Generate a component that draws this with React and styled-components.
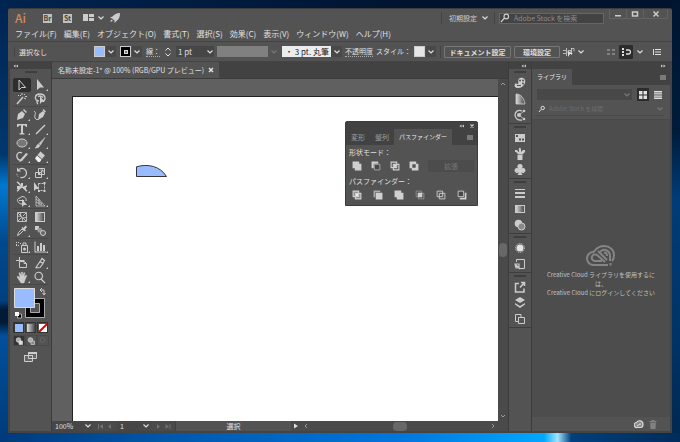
import React, { useState } from 'react';
import styled, { createGlobalStyle } from 'styled-components';

const tools = [
  [
    { name: '選択ツール', icon: <path d="M6 2v10l2.600-2.500h4z" fill="none" stroke="currentColor" /> },
    { name: 'ダイレクト選択', fly: true, icon: <path d="M6 1v11l3-2.500h4z" /> },
    {
      name: '自動選択',
      icon: (
        <g fill="none" stroke="currentColor" strokeWidth="1.500">
          <path d="M4 12l6-7" />
          <path d="M9 1v2M12 2l-1 1M11 6l2 1M7 3l1 1M12 4.500h2M5 3.500h1" strokeWidth="1" />
        </g>
      ),
    },
    {
      name: 'なげなわ',
      icon: (
        <g>
          <path d="M8 9C3 9 3 2 9 2s6 6 3 7M7 8c-2 1-1 3 0 4M7 4.500c2-1 4 0 5 1" fill="none" stroke="currentColor" strokeWidth="1.300" />
          <path d="M9 4v8l1.800-2h3z" />
        </g>
      ),
    },
  ],
  [
    { name: 'ペン', fly: true, icon: <path d="M4 12l1-6 4-3 3 3-2 4zM10 2l1-1 3 3-1 1z" /> },
    {
      name: '曲線',
      icon: (
        <g>
          <path d="M7 12l1-6 4-3 2 2-2 4zM11.500 2l1-1 2.500 2.500-1 1z" />
          <path d="M3 3c3 2 0 4 1 7 1 2 3 2 4 1" fill="none" stroke="currentColor" />
        </g>
      ),
    },
    { name: '文字', fly: true, icon: <path d="M4 2h10v3h-1L12 3.500h-2V11l1.500.5v1h-5v-1L8 11V3.500H6L5 5H4z" /> },
    { name: '直線', fly: true, icon: <path d="M5 12l9-9" stroke="currentColor" strokeWidth="1.400" /> },
    { name: '楕円形', fly: true, icon: <ellipse cx="9" cy="7" rx="5" ry="4" fill="#777" stroke="currentColor" /> },
    { name: 'ブラシ', fly: true, icon: <path d="M14 1.500L9.500 9 8 7.500zM7.500 8L9 9.500c-1 2.500-3 2.500-5 2.500 2-1 1-3 3.500-4z" stroke="currentColor" strokeWidth=".5" /> },
    {
      name: 'Shaper',
      fly: true,
      icon: (
        <g>
          <path d="M9 3C6 1 3 4 4 7c1 4 5 4 6 1" fill="none" stroke="currentColor" strokeWidth="1.300" />
          <path d="M7 10l6-7 2 1-6 7-3 1z" />
        </g>
      ),
    },
    {
      name: '消しゴム',
      fly: true,
      icon: (
        <g>
          <path d="M9.500 1.500l4.500 4-3 3.500-4.500-4z" />
          <path d="M6 5.500l4.500 4-1.500 2.500H7L4 8.500z" fill="#f0f0f0" />
        </g>
      ),
    },
  ],
  [
    {
      name: '回転',
      fly: true,
      icon: (
        <g>
          <path d="M6 3.500c4-2.500 7.500 0 7.500 3.500s-3 5-6 4.500" fill="none" stroke="currentColor" strokeWidth="1.300" />
          <path d="M5 10.500C4 9.500 3.800 8.500 4 7" fill="none" stroke="currentColor" strokeDasharray="1 1" />
          <path d="M4 1.500v4h4z" />
        </g>
      ),
    },
    {
      name: '拡大・縮小',
      fly: true,
      icon: <path d="M7.500 2.500h6v6h-6zM4.500 6.500h6v5h-6zM7 9l5-5M9.500 4H12v2.500" fill="none" stroke="currentColor" />,
    },
    {
      name: '線幅',
      fly: true,
      icon: (
        <g>
          <path d="M4 2c3 1 3 4 5 5s4-1 5-1M4 11c2-1 3-4 5-4s3 3 5 4" fill="none" stroke="currentColor" strokeWidth="1.500" />
          <path d="M4 6h3v3H4zM8 3h2v3H8zM10 7h3v2h-3z" />
        </g>
      ),
    },
    {
      name: '自由変形',
      icon: (
        <g>
          <path d="M7.500 3.500h6v7h-6z" fill="none" stroke="currentColor" strokeDasharray="2 1" />
          <path d="M3 2v9l2-2h3zM12.500 2h2v2h-2zM12.500 10h2v2h-2zM7 10h2v2H7z" />
        </g>
      ),
    },
    {
      name: 'シェイプ形成',
      fly: true,
      icon: (
        <g>
          <path d="M9 10C4 10 3 4 7 4c2-3 7-1 6 3M6 6.500h5" fill="none" stroke="currentColor" />
          <path d="M9 5v8l2-2h3z" />
        </g>
      ),
    },
    {
      name: '遠近グリッド',
      fly: true,
      icon: <path d="M5 2v10h9zM5 5l6 5M5 8l6 3M8 5v6" fill="none" stroke="currentColor" strokeWidth=".8" />,
    },
  ],
  [
    {
      name: 'メッシュ',
      icon: (
        <path
          d="M4.500 2.500h9v9h-9zM4.500 7c3-3 5 3 9 0M8 2.500c-2 4 3 5 1 9M5 3l3 3M13 3l-3 3M5 11l3-3M13 11l-3-3"
          fill="none"
          stroke="currentColor"
          strokeWidth=".9"
        />
      ),
    },
    {
      name: 'グラデーション',
      icon: <rect x="4.500" y="2.500" width="9" height="9" fill="url(#shade)" stroke="currentColor" />,
    },
    {
      name: 'スポイト',
      fly: true,
      icon: (
        <g>
          <path d="M4.500 11.500l1-3 3.500-3.500 1.500 1.500L7 10z" fill="none" stroke="currentColor" />
          <path d="M8.500 4l1-1 1 1 2-2.500L14 3l-2 2.500 1 1-1 1z" />
        </g>
      ),
    },
    {
      name: 'ブレンド',
      icon: (
        <g>
          <path d="M4 2h4v4H4z" />
          <rect x="6.500" y="4" width="4.500" height="4.500" rx="1.500" fill="#999" />
          <circle cx="12" cy="9" r="2.500" fill="#666" stroke="currentColor" />
        </g>
      ),
    },
  ],
  [
    {
      name: 'シンボルスプレー',
      fly: true,
      icon: (
        <g>
          <path d="M8.500 5.500h6v7h-6zM10 5V3h3v2" fill="none" stroke="currentColor" />
          <circle cx="11.500" cy="9" r="1.500" />
          <path d="M3 2h1v1H3zM5 2h1v1H5zM7 3h1v1H7zM3 4h1v2H3zM5 5h1v1H5z" />
        </g>
      ),
    },
    { name: '棒グラフ', fly: true, icon: <path d="M3.500 1.500h1v10H15v1H3.500zM6 6h2v5H6zM9 3h2v8H9zM12 5h2v6h-2z" /> },
  ],
  [
    {
      name: 'アートボード',
      icon: <path d="M3 4.500h8.500M6.500 1v8M6.500 5.500h5l2 2v4h-7zM11 5.500v2h2" fill="none" stroke="currentColor" />,
    },
    {
      name: 'スライス',
      fly: true,
      icon: <path d="M5 11.500l4-6 3 2-3 4-4.500.5M9.500 5L11 2.500l2.500 2L12 7" fill="none" stroke="currentColor" strokeWidth="1.200" />,
    },
    { name: '手のひら', fly: true, icon: <path d="M5 6l2 2-1-5 1-.5L8.500 6V2h1.200v4l1.300-3.500 1 .5-1 4 2-2 .8.800L12 10l-1 3H8L4 7z" stroke="currentColor" strokeWidth=".4" /> },
    {
      name: 'ズーム',
      icon: <path d="M10 9l4 4M11.500 6A3.700 3.700 0 1 1 4 6a3.700 3.700 0 0 1 7.500 0z" fill="none" stroke="currentColor" strokeWidth="1.200" />,
    },
  ],
];

const dockGroups = [
  [
    {
      name: 'カラー',
      icon: (
        <g>
          <path d="M9 2c4-1 6 2 5 5s-4 5-7 5-4-2-3-4 2 1 3 0-1-5 2-6z" />
          <g fill="#535353">
            <circle cx="9" cy="4.500" r="1" />
            <circle cx="12" cy="4.500" r="1" />
            <circle cx="12" cy="7.500" r="1" />
            <path d="M6 9h4v1H6z" />
          </g>
        </g>
      ),
    },
    { name: 'カラーガイド', icon: <path d="M5 2c5 0 8 4 9 10H5z" fill="url(#shade)" stroke="currentColor" strokeWidth=".8" /> },
    {
      name: 'カラーテーマ',
      icon: (
        <g>
          <path d="M11 3C7 1 4 4 4 7s3 6 7 5" fill="none" stroke="currentColor" strokeWidth="1.300" />
          <path d="M8 7l5-4M8 7l5 4" stroke="currentColor" strokeWidth=".8" />
          <circle cx="8" cy="7" r="2" />
          <circle cx="13" cy="3" r="1.300" />
          <circle cx="13" cy="11" r="1.300" />
        </g>
      ),
    },
  ],
  [
    { name: 'スウォッチ', icon: <path d="M4 3h10v8H4zM5 4v2h2V4zM11 7.500v2h2v-2zM8 7.500v2h2v-2z" fillRule="evenodd" /> },
    {
      name: 'ブラシ',
      icon: <path d="M6.500 8h5v5h-5zM7.500 7.500L5 5H4V3h2l2 2.500V3l-.5-1L9 .5 10 2v3l2-2h2v2l-2.500 2.500z" />,
    },
    { name: 'シンボル', icon: <path d="M9 1a2.500 2.500 0 0 1 2 4.200A2.500 2.500 0 1 1 10 9l1.500 3h-5L8 9a2.500 2.500 0 1 1-1-3.800A2.500 2.500 0 0 1 9 1z" /> },
  ],
  [
    { name: '線', icon: <path d="M4 3h10v1H4zM4 6h10v2H4zM4 10h10v2H4z" /> },
    { name: 'グラデーション', icon: <rect x="4.500" y="3.500" width="9" height="7" fill="url(#shade)" stroke="currentColor" /> },
    {
      name: '透明',
      icon: (
        <g>
          <circle cx="7.500" cy="5.500" r="3.800" />
          <circle cx="10.500" cy="8.500" r="3.500" fill="#888" stroke="currentColor" />
        </g>
      ),
    },
  ],
  [
    {
      name: 'アピアランス',
      icon: (
        <g>
          <circle cx="9" cy="7" r="3.500" fill="#e4e4e4" />
          <circle cx="9" cy="7" r="4.500" fill="none" stroke="currentColor" strokeDasharray="1 1" />
        </g>
      ),
    },
    {
      name: 'グラフィックスタイル',
      icon: (
        <g fill="none" stroke="currentColor">
          <path d="M5.500 5V2.500h8v9H9" />
          <path d="M4 7h4v4H5zM5 8l4 4" strokeWidth="1.200" />
        </g>
      ),
    },
  ],
  [
    { name: 'アセットの書き出し', icon: <path d="M8 3.500H4.500v8.500h8.500V8.500M9 7.500L13 3M10 2.500h3.500V6" fill="none" stroke="currentColor" strokeWidth="1.500" /> },
    { name: 'レイヤー', icon: <path d="M9 1l5 3-5 3-5-3zM4 7l5 3 5-3v1.500L9 12 4 8.500z" /> },
    { name: 'アートボード', icon: <path d="M10 5V2.500H4.500v7H7M7.500 5.500h6v6h-6z" fill="none" stroke="currentColor" /> },
  ],
];

const shapeModes = [
  { name: '合体', icon: <path d="M1 1h6v2h2v6H3V7H1z" /> },
  {
    name: '前面オブジェクトで型抜き',
    icon: (
      <g>
        <path d="M1 1h6v2H3v4H1z" />
        <path d="M3.500 3.500h5v5h-5z" fill="#484848" stroke="#aaa" strokeWidth=".8" />
      </g>
    ),
  },
  {
    name: '交差',
    icon: (
      <g>
        <path d="M1.500 1.500h5v5h-5zM3.500 3.500h5v5h-5z" fill="none" stroke="currentColor" />
        <path d="M4 4h2v2H4z" />
      </g>
    ),
  },
  { name: '中マド', icon: <path d="M1 1h6v2h2v6H3V7H1zM3.500 3.500v3h3v-3z" fillRule="evenodd" /> },
];

const pathfinders = [
  {
    name: '分割',
    icon: (
      <g>
        <path d="M1.500 1.500h5v5h-5zM3.500 3.500h5v5h-5z" fill="#888" stroke="currentColor" />
        <path d="M4 4h2v2H4z" fill="#eee" />
      </g>
    ),
  },
  {
    name: '刈り込み',
    icon: (
      <g>
        <path d="M1 1h6v1.500H2.500V7H1z" fill="#aaa" />
        <path d="M3 3h6v6H3z" />
      </g>
    ),
  },
  { name: '合流', icon: <path d="M1 1h6v2h2v6H3V7H1z" /> },
  {
    name: '切り抜き',
    icon: (
      <g>
        <path d="M1.500 1.500h5v5h-5zM3.500 3.500h5v5h-5z" fill="none" stroke="#999" strokeWidth=".7" />
        <path d="M3 3h4v4H3z" />
      </g>
    ),
  },
  { name: 'アウトライン', icon: <path d="M1.500 1.500h5v5h-5zM3.500 3.500h5v5h-5z" fill="none" stroke="currentColor" strokeWidth=".8" /> },
  {
    name: '背面オブジェクトで型抜き',
    icon: (
      <g>
        <path d="M7.500 3H9v6H3V7.500h4.500z" />
        <path d="M1.500 1.500h5v5h-5z" fill="#484848" stroke="currentColor" strokeWidth=".8" />
      </g>
    ),
  },
];

const menus = ['ファイル(F)', '編集(E)', 'オブジェクト(O)', '書式(T)', '選択(S)', '効果(C)', '表示(V)', 'ウィンドウ(W)', 'ヘルプ(H)'];

const Chevron = ({ dim }) => (
  <ChevronSvg viewBox="0 0 8 6" $dim={dim}>
    <path d="M1.500 1.500L4 4l2.500-2.500" />
  </ChevronSvg>
);

const Magnifier = () => (
  <SmallSvg viewBox="0 0 10 10">
    <path d="M1 9l3-3.500M4 3.500a2.300 2.300 0 1 1 4.600 0 2.300 2.300 0 0 1-4.600 0z" fill="none" stroke="currentColor" strokeWidth="1.200" />
  </SmallSvg>
);

const MenuLines = () => (
  <SmallSvg viewBox="0 0 10 10">
    <path d="M2 3h6v1H2zM2 5h6v1H2zM2 7h6v1H2zM2 3h6v5H2z" fillOpacity=".6" />
  </SmallSvg>
);

const Arrows = ({ right }) => (
  <SmallSvg viewBox="0 0 10 10">
    <path d={right ? 'M3 3.500L5 5 3 6.500zM5.500 3.500L7.500 5l-2 1.500z' : 'M4.500 3.500L2.500 5l2 1.500zM7 3.500L5 5l2 1.500z'} />
  </SmallSvg>
);

const Dropdown = ({ label, options, width, tone, disabled }) => (
  <DropdownBox $width={width} $tone={tone}>
    <select aria-label={label} disabled={disabled}>
      {options.map(option => (
        <option key={option}>{option}</option>
      ))}
    </select>
    <DropdownMark $tone={tone}>
      <Chevron dim={disabled} />
    </DropdownMark>
  </DropdownBox>
);

const App = () => {
  const [tool, setTool] = useState('選択ツール');

  return (
    <Desktop>
      <GlobalStyle />
      <Gradients aria-hidden="true">
        <defs>
          <linearGradient id="shade">
            <stop offset="0" stopColor="#ddd" />
            <stop offset="1" stopColor="#444" />
          </linearGradient>
        </defs>
      </Gradients>
      <Window>
        <TitleBar>
          <Logo>Ai</Logo>
          <AppBadge>Br</AppBadge>
          <AppBadge>St</AppBadge>
          <TitleButton aria-label="ドキュメントレイアウト">
            <WideSvg viewBox="0 0 12 10">
              <path d="M0 1h5v7H0zM6 1h5v3H6zM6 5h5v3H6z" />
            </WideSvg>
            <Chevron />
          </TitleButton>
          <TitleButton aria-label="GPU パフォーマンス">
            <WideSvg viewBox="0 0 12 10">
              <path d="M11 0C7 0 5 2 3.500 3.500L1 4.500l2 1 2.500 2V10l2-2C10 6 11 4 11 0zM1 9l1.500-2.500L4 8z" />
            </WideSvg>
          </TitleButton>
          <Spacer />
          <Divider />
          <Dropdown label="ワークスペース" options={['初期設定']} width={44} />
          <Divider />
          <StockSearch>
            <Magnifier />
            <input aria-label="Adobe Stock を検索" placeholder="Adobe Stock を検索" />
          </StockSearch>
          <WindowButtons>
            <button aria-label="最小化">
              <SmallSvg viewBox="0 0 10 10"><path d="M2 6h6v1.500H2z" /></SmallSvg>
            </button>
            <button aria-label="最大化">
              <SmallSvg viewBox="0 0 10 10"><path d="M2.500 3h5v4h-5z" fill="none" stroke="currentColor" strokeWidth="1.500" /></SmallSvg>
            </button>
            <button aria-label="閉じる">
              <SmallSvg viewBox="0 0 10 10"><path d="M2.500 2.500l5 5M7.500 2.500l-5 5" stroke="currentColor" strokeWidth="1.500" /></SmallSvg>
            </button>
          </WindowButtons>
        </TitleBar>

        <MenuBar>
          {menus.map(menu => (
            <button key={menu}>{menu}</button>
          ))}
        </MenuBar>

        <ControlBar>
          <SelectionLabel>選択なし</SelectionLabel>
          <SwatchButton aria-label="塗り">
            <Swatch $fill="#99bbff" />
            <ChevronCell><Chevron /></ChevronCell>
          </SwatchButton>
          <SwatchButton aria-label="線の色">
            <Swatch $fill="#000"><i /></Swatch>
            <ChevronCell><Chevron /></ChevronCell>
          </SwatchButton>
          <BarLabel as="label" htmlFor="stroke-width" $underline>線：</BarLabel>
          <SmallSvg viewBox="0 0 10 10">
            <path d="M2.500 3.500L5 1l2.500 2.500M2.500 6.500L5 9l2.500-2.500" fill="none" stroke="currentColor" />
          </SmallSvg>
          <StrokeField>
            <input id="stroke-width" defaultValue="1 pt" />
            <Chevron />
          </StrokeField>
          <Dropdown label="可変線幅プロファイル" options={['']} width={62} tone="grey" disabled />
          <Dropdown label="ブラシ定義" options={['・ 3 pt. 丸筆']} width={60} tone="white" />
          <BarLabel $underline>不透明度</BarLabel>
          <BarLabel>スタイル：</BarLabel>
          <SwatchButton aria-label="グラフィックスタイル">
            <Swatch $fill="#e6e6e6" />
            <ChevronCell><Chevron /></ChevronCell>
          </SwatchButton>
          <Divider />
          <OutlineButton $width={67}>ドキュメント設定</OutlineButton>
          <OutlineButton $width={46}>環境設定</OutlineButton>
          <TitleButton aria-label="整列">
            <WideSvg viewBox="0 0 12 10">
              <path d="M0 3.500h3M0 6.500h3M3.500 1v8M5 3.500h3v3H5zM8.500 1v7M8 1.500h3v3" fill="none" stroke="currentColor" strokeWidth=".7" />
              <path d="M5 4l5 3H7l-2 3z" />
            </WideSvg>
            <Chevron />
          </TitleButton>
          <Spacer />
          <DimIcon>
            <SmallSvg viewBox="0 0 10 10"><path d="M1 2h3v2H1zM6 2h3v2H6zM1 6h3v2H1zM6 6h3v2H6z" /></SmallSvg>
          </DimIcon>
          <SnapButton aria-label="スナップ">
            <SmallSvg viewBox="0 0 10 10">
              <path d="M1 1h2v2H1zM1 4h2v2H1zM1 7h2v2H1z" />
              <path d="M5 3h2.500a1.500 1.500 0 0 1 0 4H5" fill="none" stroke="currentColor" strokeWidth="1.300" />
            </SmallSvg>
          </SnapButton>
          <Chevron />
          <ListButton aria-label="コントロールメニュー">
            <SmallSvg viewBox="0 0 10 10"><path d="M1 2h1v6H1zM3 2h6v1H3zM3 4.500h6v1H3zM3 7h6v1H3z" /></SmallSvg>
          </ListButton>
        </ControlBar>

        <Workspace>
          <ToolColumn>
            <Strip $start><Arrows /></Strip>
            <Grip />
            {tools.map((group, i) => (
              <ToolGroup key={i}>
                {group.map(item => (
                  <ToolButton key={item.name} aria-label={item.name} $active={tool === item.name} onClick={() => setTool(item.name)}>
                    <IconSvg viewBox="0 0 18 14">
                      {item.icon}
                      {item.fly && <path d="M17 11v2h-2z" />}
                    </IconSvg>
                  </ToolButton>
                ))}
              </ToolGroup>
            ))}
            <PaintSvg viewBox="0 0 34 34" role="img" aria-label="塗りと線">
              <path d="M11.500 12.500h19v19h-19z" fill="#000" stroke="#aaa" />
              <path d="M16.500 17.500h9v9h-9z" fill="#535353" stroke="#aaa" />
              <path d="M.5 2.500h20v19H.5z" fill="#99bbff" stroke="#ddd" />
              <path d="M27 4h3v4M28 2l-2 2 2 2M28.500 7l1.500 2 1.500-2" fill="none" stroke="#ccc" />
              <path d="M3.500 28h4v4h-4z" fill="#000" stroke="#ccc" strokeWidth=".8" />
              <path d="M1 26h4v4H1z" fill="#fff" />
            </PaintSvg>
            <PaintRow>
              <button aria-label="カラー"><PaintSvgSmall viewBox="0 0 8 8"><path d="M0 0h8v8H0z" fill="#99bbff" /></PaintSvgSmall></button>
              <button aria-label="グラデーション"><PaintSvgSmall viewBox="0 0 8 8"><path d="M0 0h8v8H0z" fill="url(#shade)" /></PaintSvgSmall></button>
              <button aria-label="なし">
                <PaintSvgSmall viewBox="0 0 8 8">
                  <path d="M0 0h8v8H0z" fill="#fff" />
                  <path d="M0 8l8-8" stroke="#e00" strokeWidth="2" />
                </PaintSvgSmall>
              </button>
            </PaintRow>
            <PaintRow $modes>
              {['標準描画', '背面描画', '内側描画'].map((mode, i) => (
                <button key={mode} aria-label={mode}>
                  <PaintSvgSmall viewBox="0 0 8 8">
                    <circle cx="3.500" cy="3" r="2.300" fill={i === 2 ? 'none' : '#aaa'} stroke={i === 2 ? '#6a6a6a' : '#ddd'} strokeWidth=".7" />
                    {i < 2 && <path d="M4 4h3.500v3.500H4z" fill={i ? '#888' : '#ddd'} stroke="#ddd" strokeWidth=".6" />}
                  </PaintSvgSmall>
                </button>
              ))}
            </PaintRow>
            <ScreenButton aria-label="スクリーンモード">
              <IconSvg viewBox="0 0 18 14">
                <path d="M6.500 2.500h8v6h-8zM2.500 5.500h8v6h-8z" fill="#666" stroke="currentColor" />
                <path d="M6 2h9v2H6zM2 5h9v1H2z" />
              </IconSvg>
            </ScreenButton>
          </ToolColumn>

          <DocumentArea>
            <DocTabs>
              <DocTab>
                名称未設定-1* @ 100% (RGB/GPU プレビュー)
                <button aria-label="タブを閉じる">
                  <SmallSvg viewBox="0 0 10 10"><path d="M3 3l4 4M7 3L3 7" stroke="currentColor" strokeWidth="1.500" /></SmallSvg>
                </button>
              </DocTab>
            </DocTabs>
            <CanvasRow>
              <Canvas>
                <Artboard>
                  <Shape viewBox="0 0 32 12">
                    <path d="M.5 1.800C12-1.500 24 1 30.500 11.500H.5z" fill="#99bbff" stroke="#222" strokeWidth=".9" />
                  </Shape>
                  <Floating>
                    <FloatingStrip>
                      <Arrows />
                      <button aria-label="パネルを閉じる">
                        <SmallSvg viewBox="0 0 10 10"><path d="M3.500 3.500l3 3M6.500 3.500l-3 3" stroke="currentColor" strokeWidth="1.200" /></SmallSvg>
                      </button>
                    </FloatingStrip>
                    <PanelTabs>
                      <PanelTab>変形</PanelTab>
                      <PanelTab>整列</PanelTab>
                      <PanelTab $active>パスファインダー</PanelTab>
                      <Spacer />
                      <MenuLines />
                    </PanelTabs>
                    <PanelTitle>形状モード：</PanelTitle>
                    <PathRow $gap={9}>
                      {shapeModes.map(item => (
                        <button key={item.name} aria-label={item.name}>
                          <SmallSvg viewBox="0.500 0.500 9 9">{item.icon}</SmallSvg>
                        </button>
                      ))}
                      <ExpandButton disabled>拡張</ExpandButton>
                    </PathRow>
                    <PanelTitle>パスファインダー：</PanelTitle>
                    <PathRow $gap={11}>
                      {pathfinders.map(item => (
                        <button key={item.name} aria-label={item.name}>
                          <SmallSvg viewBox="0.500 0.500 9 9">{item.icon}</SmallSvg>
                        </button>
                      ))}
                    </PathRow>
                  </Floating>
                </Artboard>
              </Canvas>
              <ScrollColumn>
                <SmallSvg viewBox="0 0 10 10"><path d="M3 6l2-2 2 2" fill="none" stroke="currentColor" /></SmallSvg>
                <Thumb $vertical />
                <SmallSvg viewBox="0 0 10 10"><path d="M3 4l2 2 2-2" fill="none" stroke="currentColor" /></SmallSvg>
              </ScrollColumn>
            </CanvasRow>
            <StatusBar>
              <Dropdown label="ズーム" options={['100%']} width={41} tone="dark" />
              <StatusNav>
                <SmallSvg viewBox="0 0 10 10"><path d="M3 3h1v5H3zM8 3v5L4.500 5.500z" /></SmallSvg>
                <SmallSvg viewBox="0 0 10 10"><path d="M6 3v5L3 5.500z" /></SmallSvg>
              </StatusNav>
              <Dropdown label="アートボード" options={['1']} width={34} tone="dark" />
              <StatusNav>
                <SmallSvg viewBox="0 0 10 10"><path d="M4 3v5l3-2.500z" /></SmallSvg>
                <SmallSvg viewBox="0 0 10 10"><path d="M6.500 3h1v5h-1zM2.500 3v5L6 5.500z" /></SmallSvg>
              </StatusNav>
              <StatusText>選択</StatusText>
              <PlayButton aria-label="ステータス表示">
                <SmallSvg viewBox="0 0 10 10"><path d="M3 2.500v5L7 5z" /></SmallSvg>
              </PlayButton>
              <ScrollRow>
                <SmallSvg viewBox="0 0 10 10"><path d="M6 3L4 5l2 2" fill="none" stroke="currentColor" /></SmallSvg>
                <Thumb />
                <SmallSvg viewBox="0 0 10 10"><path d="M4 3l2 2-2 2" fill="none" stroke="currentColor" /></SmallSvg>
              </ScrollRow>
            </StatusBar>
          </DocumentArea>

          <Dock>
            <Strip><Arrows /></Strip>
            {dockGroups.map((group, i) => (
              <DockGroup key={i}>
                <Grip />
                {group.map(item => (
                  <button key={item.name} aria-label={item.name}>
                    <IconSvg viewBox="0 0 18 14">{item.icon}</IconSvg>
                  </button>
                ))}
              </DockGroup>
            ))}
          </Dock>

          <Library>
            <Strip><Arrows right /></Strip>
            <PanelTabs>
              <PanelTab $active>ライブラリ</PanelTab>
              <Spacer />
              <MenuLines />
            </PanelTabs>
            <LibraryTools>
              <LibraryRow>
                <Dropdown label="ライブラリ" options={['']} tone="sunken" disabled />
                <ViewButton aria-label="アイコン表示" $active>
                  <SmallSvg viewBox="0 0 10 10"><path d="M1 1h3.500v3.500H1zM5.500 1H9v3.500H5.500zM1 5.500h3.500V9H1zM5.500 5.500H9V9H5.500z" /></SmallSvg>
                </ViewButton>
                <ViewButton aria-label="リスト表示">
                  <SmallSvg viewBox="0 0 10 10"><path d="M1 1h8v1.400H1zM1 3.200h8v1.400H1zM1 5.400h8v1.400H1zM1 7.600h8V9H1z" /></SmallSvg>
                </ViewButton>
              </LibraryRow>
              <LibrarySearch>
                <SmallSvg viewBox="0 0 10 10">
                  <path d="M2 8l2-2.500M4 4a1.700 1.700 0 1 1 3.400 0A1.700 1.700 0 0 1 4 4z" fill="none" stroke="currentColor" />
                </SmallSvg>
                <input aria-label="ライブラリ検索" placeholder="Adobe Stock を検索" disabled />
                <Chevron dim />
              </LibrarySearch>
            </LibraryTools>
            <LibraryBody>
              <CloudSvg viewBox="0 0 30 22">
                <path d="M22 20H8a6.500 6.500 0 0 1-1-13c2 0 3-6 11-6 6 0 10 4 10 9 0 3-1 5-2 6" />
                <path d="M16 16H9a3.300 3.300 0 1 1 2-6l8 7M12 6l9 9" />
                <path d="M14 7c3-4 10-2 10 4v5M18 8c2-1 3 1 3 3" />
                <path d="M24.500 18v2.500" />
              </CloudSvg>
              <p>Creative Cloud ライブラリを使用するには、</p>
              <p>Creative Cloud にログインしてください</p>
            </LibraryBody>
            <LibraryFooter>
              <SmallSvg viewBox="0 0 10 10">
                <path d="M3 8.500a2.500 2.500 0 0 1-.5-5 3.500 3.500 0 0 1 6.500 2c0 2-1 3-2.500 3z" fill="#888" stroke="#e0d8d0" strokeWidth="1.200" />
                <path d="M3 6.500c2 1 2-3 4-1" fill="none" stroke="#fff" />
              </SmallSvg>
              <DimIcon>
                <SmallSvg viewBox="0 0 10 10"><path d="M1.500 2h2V1h3v1h2v1h-7zM2 3.500h6L7.500 10h-5z" /></SmallSvg>
              </DimIcon>
            </LibraryFooter>
          </Library>
        </Workspace>
      </Window>
    </Desktop>
  );
};

export default App;

const GlobalStyle = createGlobalStyle`
  * {
    box-sizing: border-box;
  }

  body {
    margin: 0;
    font: 7px/10px "Noto Sans CJK JP", sans-serif;
    color: #e0e0e0;
  }

  button, input, select {
    margin: 0;
    padding: 0;
    border: 0;
    border-radius: 0;
    background: none;
    font: inherit;
    color: inherit;
  }

  button {
    display: flex;
    align-items: center;
    justify-content: center;
    white-space: nowrap;
  }

  svg {
    display: block;
    flex: none;
    fill: currentColor;
  }

  p {
    margin: 0;
  }
`;

const Desktop = styled.div`
  display: flex;
  flex-direction: column;
  min-height: 100vh;
  padding: 8px 8px 9px;
  background:
    linear-gradient(to right, #003a7c, #0058ac 25%, #0078e0 60%, #00a8ff 80%, #9fe4ff 82%, #00407c 84%, #002c5c) left bottom / 100% 9px no-repeat,
    linear-gradient(#002450, #00386e 35%, #0078d0 42%, #00488c 55%, #004080 68%, #001a38 70%, #001a38 73%, #00509c 76%, #003a78) left top / 8px 100% no-repeat,
    linear-gradient(#001630, #001c3c 30%, #003c78 45%, #003468 75%, #002850) right top / 8px 100% no-repeat,
    linear-gradient(to right, #002450, #001430 60%);
`;

const Gradients = styled.svg`
  position: absolute;
  width: 0;
  height: 0;
`;

const Window = styled.div`
  flex: 1;
  display: flex;
  flex-direction: column;
  border-top: 1px solid #3c3c3c;
  border-bottom: 2px solid #444;
  border-radius: 2px 2px 0 0;
  background: #535353;
  overflow: hidden;
`;

const Spacer = styled.div`
  flex: 1;
`;

const Divider = styled.div`
  width: 1px;
  height: 12px;
  background: #444;
`;

const SmallSvg = styled.svg`
  width: 10px;
  height: 10px;
`;

const WideSvg = styled.svg`
  width: 12px;
  height: 10px;
`;

const IconSvg = styled.svg`
  width: 18px;
  height: 14px;
`;

const ChevronSvg = styled.svg`
  width: 8px;
  height: 6px;
  fill: none;
  stroke: ${props => (props.$dim ? '#777' : '#ddd')};
  stroke-width: 1.2;
`;

const TitleBar = styled.header`
  display: flex;
  align-items: center;
  height: 18px;
  padding: 0 4px 0 7px;
  gap: 4px;
  color: #ccc;
`;

const Logo = styled.div`
  width: 24px;
  font-size: 12px;
  font-weight: 500;
  color: #d08c5c;
`;

const AppBadge = styled.div`
  width: 9px;
  margin-right: 7px;
  background: #c0c0c0;
  color: #444;
  font-size: 7px;
  font-weight: 700;
  line-height: 9px;
  text-align: center;
`;

const TitleButton = styled.button`
  gap: 2px;
`;

const StockSearch = styled.div`
  display: flex;
  align-items: center;
  gap: 4px;
  width: 105px;
  height: 11px;
  margin-right: 1px;
  border: 1px solid #666;
  background: #434343;

  input {
    flex: 1;
    min-width: 0;
    height: 9px;
    font-size: 7px;
  }

  input::placeholder {
    color: #8c8c8c;
  }
`;

const WindowButtons = styled.div`
  display: flex;
  align-self: flex-start;

  button {
    width: 17px;
    height: 10px;
    border: 1px solid #626262;
    border-width: 0 0 1px 1px;
  }

  button:last-child {
    width: 25px;
    border-right-width: 1px;
  }
`;

const MenuBar = styled.nav`
  display: flex;
  gap: 7px;
  height: 15px;
  padding-left: 7px;
  border-bottom: 1px solid #444;
  font-size: 8px;
`;

const DropdownBox = styled.div`
  display: grid;
  align-items: center;
  flex: ${props => (props.$width ? 'none' : '1')};
  width: ${props => (props.$width ? `${props.$width}px` : 'auto')};

  select {
    grid-area: 1 / 1;
    width: 100%;
    height: ${props => (props.$tone === 'dark' ? '10px' : '11px')};
    padding: 0 12px 0 3px;
    appearance: none;
    background: ${props => ({ grey: '#808080', white: '#ececec', dark: '#464646', sunken: '#484848' })[props.$tone] || 'none'};
    color: ${props => (props.$tone === 'white' ? '#222' : 'inherit')};
    opacity: 1;
  }
`;

const DropdownMark = styled.span`
  grid-area: 1 / 1;
  justify-self: end;
  display: grid;
  place-items: center;
  width: 11px;
  height: ${props => (props.$tone === 'dark' ? '10px' : '11px')};
  background: ${props => ({ grey: '#535353', white: '#484848', dark: '#484848' })[props.$tone] || 'none'};
  pointer-events: none;
`;

const ControlBar = styled.div`
  display: flex;
  align-items: center;
  gap: 3px;
  height: 20px;
  padding: 0 10px 0 6px;
  border-bottom: 1px solid #444;

  select {
    font-size: 8px;
  }
`;

const SelectionLabel = styled.div`
  width: 77px;
  padding-left: 4px;
  border-left: 1px solid #444;
`;

const SwatchButton = styled.button`
  gap: 1px;
  margin-right: 1px;
`;

const Swatch = styled.span`
  display: grid;
  place-items: center;
  width: 11px;
  height: 11px;
  border: 1px solid #ccc;
  background: ${props => props.$fill};

  i {
    width: 4px;
    height: 4px;
    border: 1px solid #ddd;
    background: #777;
  }
`;

const ChevronCell = styled.span`
  display: grid;
  place-items: center;
  width: 10px;
  height: 11px;
  background: #484848;
`;

const BarLabel = styled.span`
  white-space: nowrap;
  border-bottom: 1px ${props => (props.$underline ? 'dotted #aaa' : 'solid transparent')};
`;

const StrokeField = styled.div`
  display: flex;
  align-items: center;
  width: 38px;
  height: 11px;
  padding-left: 2px;
  background: #464646;

  input {
    flex: 1;
    min-width: 0;
    font-size: 8px;
  }
`;

const OutlineButton = styled.button`
  width: ${props => props.$width}px;
  height: 12px;
  border: 1px solid #777;
  border-radius: 1px;
  font-weight: 700;
`;

const DimIcon = styled.span`
  color: #808080;
`;

const SnapButton = styled.button`
  width: 14px;
  height: 14px;
  border-radius: 1px;
  background: #2c2c2c;
`;

const ListButton = styled.button`
  margin-left: 5px;
`;

const Workspace = styled.div`
  flex: 1;
  display: grid;
  grid-template-columns: 44px 1fr 24px 140px;
  min-height: 0;
`;

const Strip = styled.div`
  display: flex;
  justify-content: ${props => (props.$start ? 'flex-start' : 'flex-end')};
  align-items: center;
  height: 7px;
  padding: 0 2px 0 1px;
  background: #424242;
  color: #ccc;
`;

const Grip = styled.div`
  width: 12px;
  height: 2px;
  margin: 2px auto;
  background: #3e3e3e;
`;

const ToolColumn = styled.aside`
  border-left: 2px solid #444;
  border-right: 1px solid #3c3c3c;
  color: #ccc;

  ${Grip} {
    margin: 2px auto 5px;
  }
`;

const ToolGroup = styled.div`
  display: grid;
  grid-template-columns: 18px 18px;
  margin: 0 3px 1px;
  border-bottom: 1px solid #484848;
`;

const ToolButton = styled.button`
  height: 14px;
  border-radius: 2px;
  background: ${props => (props.$active ? '#2e2e2e' : 'none')};
`;

const PaintSvg = styled.svg`
  width: 34px;
  height: 34px;
  margin-left: 4px;
`;

const PaintRow = styled.div`
  display: flex;
  gap: ${props => (props.$modes ? '0' : '1px')};
  margin: 2px 0 2px 3px;

  button {
    width: ${props => (props.$modes ? '12px' : '11px')};
    height: 11px;
    border: 1px solid ${props => (props.$modes ? '#4a4a4a' : '#333')};
  }

  button:first-child {
    background: #333;
  }
`;

const PaintSvgSmall = styled.svg`
  width: 8px;
  height: 8px;
`;

const ScreenButton = styled.button`
  margin: 4px auto;
`;

const DocumentArea = styled.main`
  display: flex;
  flex-direction: column;
  min-width: 0;
`;

const DocTabs = styled.div`
  display: flex;
  height: 17px;
  border-bottom: 1px solid #3c3c3c;
  background: #424242;
`;

const DocTab = styled.div`
  display: flex;
  align-items: center;
  gap: 2px;
  padding: 0 3px 0 6px;
  background: #535353;
  white-space: nowrap;
`;

const CanvasRow = styled.div`
  flex: 1;
  display: flex;
  min-height: 0;
`;

const Canvas = styled.div`
  flex: 1;
  display: flex;
  padding: 17px 0 0 20px;
  background: #606060;
`;

const Artboard = styled.div`
  position: relative;
  flex: 1;
  border: 1px solid #222;
  border-width: 1px 0 0 1px;
  background: #fff;
`;

const Shape = styled.svg`
  position: absolute;
  left: 63px;
  top: 68px;
  width: 32px;
  height: 12px;
`;

const Floating = styled.section`
  position: absolute;
  top: 24px;
  right: 20px;
  width: 133px;
  padding-bottom: 2px;
  border: 1px solid #3c3c3c;
  border-radius: 2px 2px 0 0;
  background: #535353;
`;

const FloatingStrip = styled.div`
  display: flex;
  justify-content: flex-end;
  align-items: center;
  height: 7px;
  background: #424242;
  color: #ccc;
`;

const PanelTabs = styled.div`
  display: flex;
  align-items: center;
  height: 16px;
  padding-right: 2px;
  background: #424242;
  color: #a0a0a0;
`;

const PanelTab = styled.button`
  height: 16px;
  padding: 0 5px;
  background: ${props => (props.$active ? '#535353' : 'none')};
  color: ${props => (props.$active ? '#e8e8e8' : '#a0a0a0')};
  font-size: ${props => (props.$active ? '6px' : '7px')};
`;

const PanelTitle = styled.h2`
  margin: 1px 0 0 3px;
  font-size: 7px;
  font-weight: 400;
  line-height: 12px;
`;

const PathRow = styled.div`
  display: flex;
  align-items: center;
  gap: ${props => props.$gap}px;
  height: 16px;
  padding: 0 3px 0 6px;
  color: #d0d0d0;
`;

const ExpandButton = styled.button`
  flex: 1;
  height: 12px;
  background: #4c4c4c;
  color: #777;
`;

const ScrollColumn = styled.div`
  display: flex;
  flex-direction: column;
  align-items: center;
  justify-content: space-between;
  width: 10px;
  background: #4a4a4a;
  color: #999;
`;

const Thumb = styled.div`
  width: ${props => (props.$vertical ? '8px' : '14px')};
  height: ${props => (props.$vertical ? '14px' : '9px')};
  border-radius: 4px;
  background: #686868;
`;

const StatusBar = styled.footer`
  display: flex;
  align-items: center;
  height: 10px;
  background: #4a4a4a;
`;

const StatusNav = styled.div`
  display: flex;
  padding: 0 2px;
  color: #707070;
`;

const StatusText = styled.div`
  flex: none;
  width: 116px;
  border-left: 1px solid #404040;
  background: #535353;
  text-align: center;
`;

const PlayButton = styled.button`
  width: 10px;
`;

const ScrollRow = styled.div`
  flex: 1;
  display: flex;
  align-items: center;
  justify-content: space-between;
  padding-right: 10px;
  color: #999;
`;

const Dock = styled.aside`
  border-left: 1px solid #3c3c3c;
  border-right: 1px solid #3c3c3c;
  color: #ccc;
`;

const DockGroup = styled.div`
  border-bottom: 1px solid #3e3e3e;

  button {
    width: 100%;
    height: 16px;
  }
`;

const Library = styled.section`
  display: flex;
  flex-direction: column;
  border-right: 2px solid #444;
`;

const LibraryTools = styled.div`
  padding: 3px 6px 3px 5px;
  border-bottom: 1px solid #4a4a4a;
`;

const LibraryRow = styled.div`
  display: flex;
  align-items: center;
  gap: 3px;
`;

const ViewButton = styled.button`
  width: 12px;
  height: 13px;
  margin-left: ${props => (props.$active ? '2px' : '0')};
  background: ${props => (props.$active ? '#2c2c2c' : 'none')};
`;

const LibrarySearch = styled.div`
  display: flex;
  align-items: center;
  gap: 2px;
  margin-top: 3px;
  padding-bottom: 1px;
  border-bottom: 1px solid #4a4a4a;

  input {
    flex: 1;
    min-width: 0;
    font-size: 6px;
  }

  input::placeholder {
    color: #6c6c6c;
  }
`;

const LibraryBody = styled.div`
  flex: 1;
  display: flex;
  flex-direction: column;
  align-items: center;
  justify-content: center;
  padding: 4px 12px 0;
  background: #4d4d4d;
  color: #c0c0c0;
  font-size: 6px;
  line-height: 9px;
  text-align: center;
`;

const CloudSvg = styled.svg`
  width: 30px;
  height: 22px;
  margin-bottom: 3px;
  fill: none;
  stroke: #858585;
  stroke-width: 2;
`;

const LibraryFooter = styled.div`
  display: flex;
  align-items: center;
  justify-content: flex-end;
  gap: 4px;
  height: 14px;
  padding-right: 12px;
`;
